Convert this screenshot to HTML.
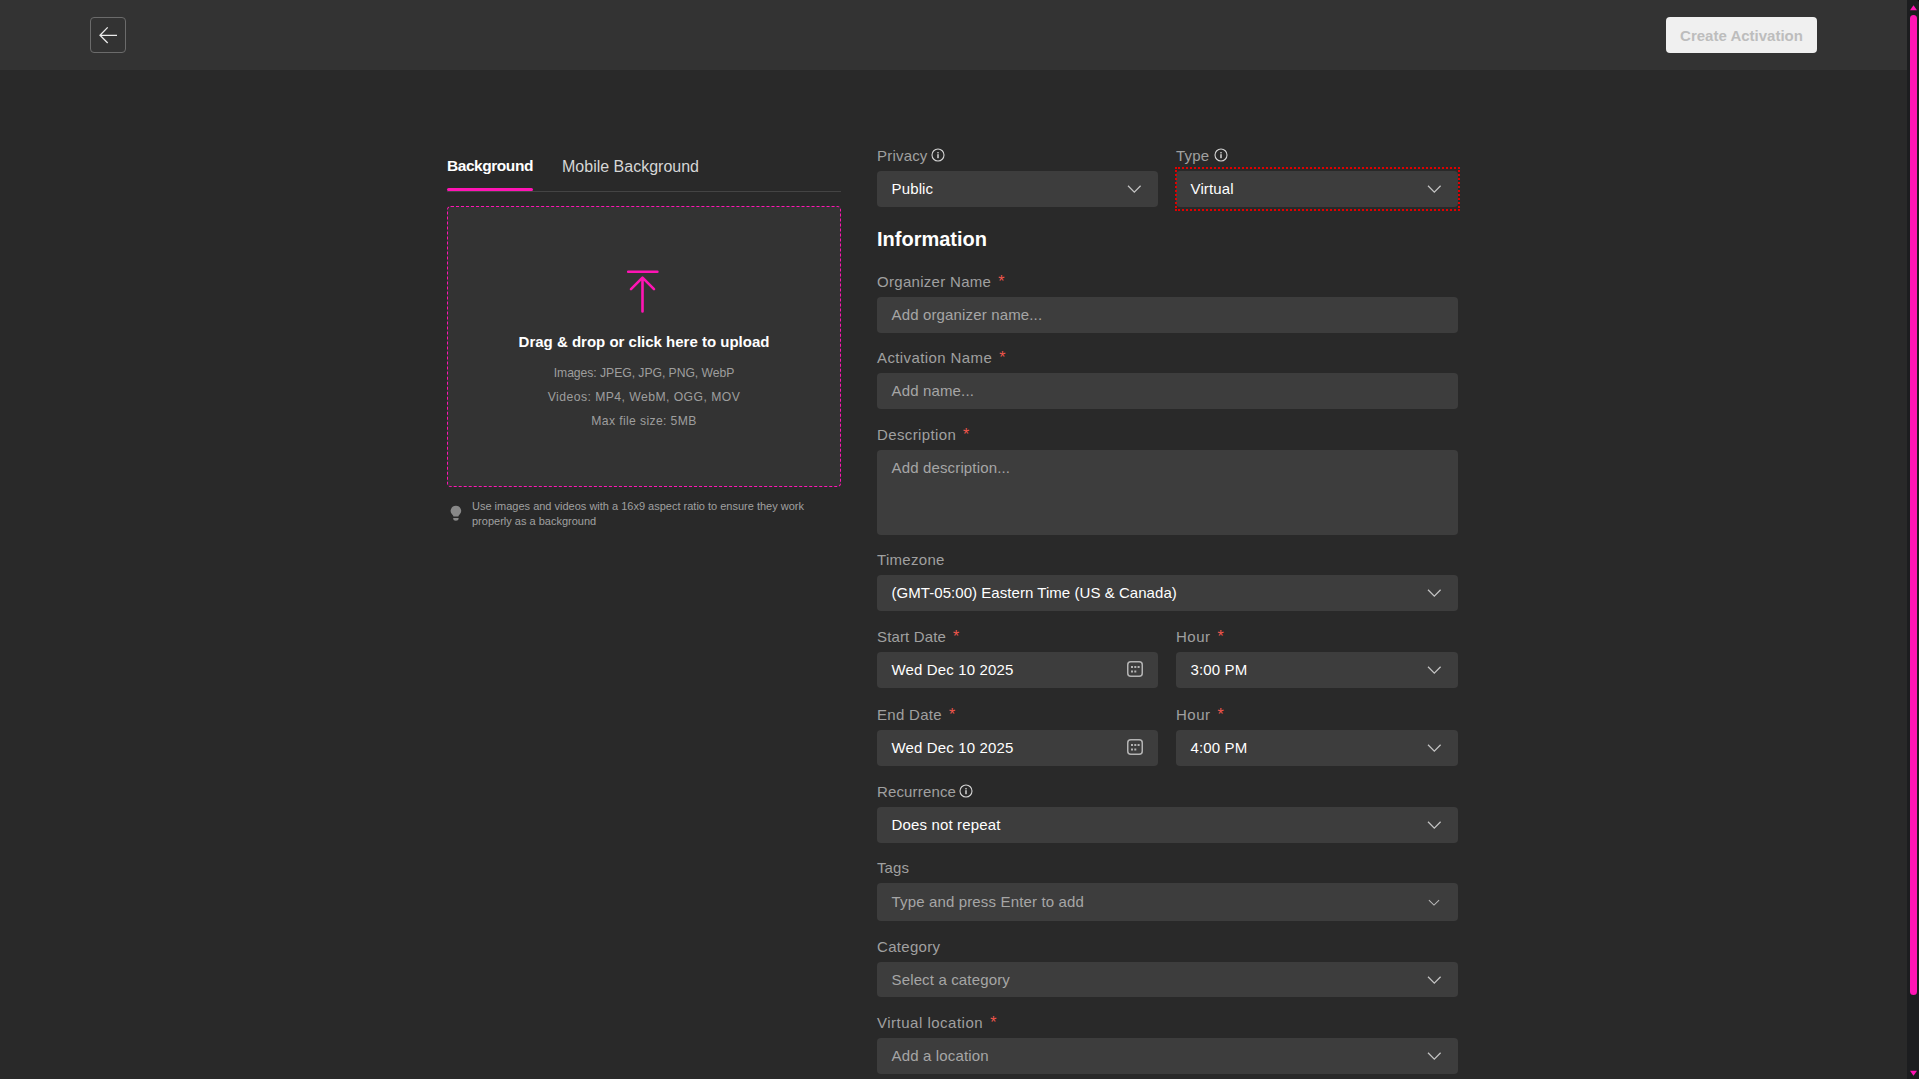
<!DOCTYPE html>
<html><head><meta charset="utf-8">
<style>
*{box-sizing:border-box;margin:0;padding:0}
html,body{width:1919px;height:1079px;overflow:hidden;background:#292929;font-family:"Liberation Sans",sans-serif;}
.a{position:absolute}
#hdr{left:0;top:0;width:1907px;height:70px;background:#333333}
#back{left:90px;top:17px;width:36px;height:36px;border:1px solid #6b6b6b;border-radius:4px}
#create{left:1666px;top:17px;width:151px;height:36px;background:#f0f0f0;border-radius:4px;color:#bdbdbd;font-size:15px;font-weight:bold;line-height:36px;padding-top:1px;text-align:center}
#sb{left:1907px;top:0;width:12px;height:1079px;background:#1c1d1f}
#thumb{left:1910px;top:15px;width:7px;height:980px;background:#ff14b4;border-radius:3.5px}
.tab{font-size:16px;line-height:20px;top:157px;white-space:nowrap}
.lbl{font-size:15px;color:#a0a0a0;white-space:nowrap;line-height:20px;margin-top:1px;letter-spacing:0.15px}
.req{color:#f0564c;margin-left:7px;font-size:16px;letter-spacing:0}
.fld{background:#3d3d3d;border-radius:4px;height:36px;font-size:15px;line-height:36px;padding-left:14.5px;color:#fff;white-space:nowrap;letter-spacing:0.15px}
.ph{color:#a6a6a6}
.chev{position:absolute;right:16px;top:12px;width:16px;height:12px}
</style></head><body>
<div id="hdr" class="a"></div>
<div id="back" class="a"><svg width="34" height="34" viewBox="0 0 34 34"><path d="M9 17.4H26M16.7 9.4L9 17.2L16.7 25" stroke="#ebebeb" stroke-width="1.3" fill="none"/></svg></div>
<div id="create" class="a">Create Activation</div>

<!-- Tabs -->
<div class="a tab" style="left:447px;color:#fff;font-weight:bold;font-size:15.5px;letter-spacing:-0.45px;top:156px">Background</div>
<div class="a tab" style="left:562px;color:#d6d6d6">Mobile Background</div>
<div class="a" style="left:447px;top:191px;width:394px;height:1px;background:#444"></div>
<div class="a" style="left:447px;top:188px;width:86px;height:3px;background:#ff14b4;border-radius:2px"></div>

<!-- Upload -->
<div class="a" style="left:447px;top:206px;width:394px;height:281px;background:#333;border:1px dashed #ff14b4;border-radius:4px"></div>
<svg class="a" style="left:620px;top:260px" width="46" height="60" viewBox="0 0 46 60"><path d="M8.2 11.7H37.4M22.5 18.5V51.5M11 29.2L22.5 17.7L34 29.2" stroke="#ff14b4" stroke-width="2.6" stroke-linecap="round" stroke-linejoin="round" fill="none"/></svg>
<div class="a" style="left:447px;top:332px;width:394px;text-align:center;color:#fff;font-weight:bold;font-size:15px;line-height:20px">Drag &amp; drop or click here to upload</div>
<div class="a" style="left:447px;top:361px;width:394px;text-align:center;color:#9e9e9e;font-size:12.2px;line-height:24px"><div style="letter-spacing:-0.05px">Images: JPEG, JPG, PNG, WebP</div><div style="letter-spacing:0.45px">Videos: MP4, WebM, OGG, MOV</div><div style="letter-spacing:0.36px">Max file size: 5MB</div></div>
<svg class="a" style="left:449px;top:505px" width="14" height="18" viewBox="0 0 14 18"><path d="M6.9 0.7A5.2 5.2 0 0 0 3.2 9.6C3.9 10.4 4.4 11 4.4 11.6H9.4C9.4 11 9.9 10.4 10.6 9.6A5.2 5.2 0 0 0 6.9 0.7ZM4.2 13H9.6V13.6C9.6 15 8.4 15.8 6.9 15.8S4.2 15 4.2 13.6Z" fill="#888"/></svg>
<div class="a" style="left:472px;top:499px;width:360px;color:#a0a0a0;font-size:11px;line-height:15px">Use images and videos with a 16x9 aspect ratio to ensure they work properly as a background</div>

<!-- Right form -->
<div class="a lbl" style="left:877px;top:145px;letter-spacing:0.2px">Privacy</div>
<div class="a lbl" style="left:1176px;top:145px;letter-spacing:0.2px">Type</div>
<div class="a fld" style="left:877px;top:171px;width:281px">Public</div>
<div class="a fld" style="left:1176px;top:171px;width:282px">Virtual</div>
<div class="a" style="left:1175px;top:167px;width:285px;height:44px;border:2px dotted #e00000"></div>
<div class="a" style="left:877px;top:227px;font-size:20px;font-weight:bold;color:#fff;line-height:24px">Information</div>

<div class="a lbl" style="left:877px;top:271px;letter-spacing:0.3px">Organizer Name<span class="req">*</span></div>
<div class="a fld ph" style="left:877px;top:297px;width:581px">Add organizer name...</div>
<div class="a lbl" style="left:877px;top:347px;letter-spacing:0.4px">Activation Name<span class="req">*</span></div>
<div class="a fld ph" style="left:877px;top:373px;width:581px">Add name...</div>
<div class="a lbl" style="left:877px;top:424px;letter-spacing:0.37px">Description<span class="req">*</span></div>
<div class="a fld ph" style="left:877px;top:450px;width:581px;height:85px;line-height:20px;padding-top:8px">Add description...</div>
<div class="a lbl" style="left:877px;top:549px;letter-spacing:0.3px">Timezone</div>
<div class="a fld" style="left:877px;top:575px;width:581px;letter-spacing:0.05px">(GMT-05:00) Eastern Time (US &amp; Canada)</div>
<div class="a lbl" style="left:877px;top:626px;letter-spacing:0.15px">Start Date<span class="req">*</span></div>
<div class="a lbl" style="left:1176px;top:626px;letter-spacing:0.5px">Hour<span class="req">*</span></div>
<div class="a fld" style="left:877px;top:652px;width:281px">Wed Dec 10 2025</div>
<div class="a fld" style="left:1176px;top:652px;width:282px">3:00 PM</div>
<div class="a lbl" style="left:877px;top:704px;letter-spacing:0.3px">End Date<span class="req">*</span></div>
<div class="a lbl" style="left:1176px;top:704px;letter-spacing:0.5px">Hour<span class="req">*</span></div>
<div class="a fld" style="left:877px;top:730px;width:281px">Wed Dec 10 2025</div>
<div class="a fld" style="left:1176px;top:730px;width:282px">4:00 PM</div>
<div class="a lbl" style="left:877px;top:781px;letter-spacing:0.15px">Recurrence</div>
<div class="a fld" style="left:877px;top:807px;width:581px">Does not repeat</div>
<div class="a lbl" style="left:877px;top:857px;letter-spacing:0.1px">Tags</div>
<div class="a fld ph" style="left:877px;top:883px;width:581px;height:38px;line-height:38px">Type and press Enter to add</div>
<div class="a lbl" style="left:877px;top:936px;letter-spacing:0.3px">Category</div>
<div class="a fld ph" style="left:877px;top:962px;width:581px;height:35px;line-height:35px">Select a category</div>
<div class="a lbl" style="left:877px;top:1012px;letter-spacing:0.5px">Virtual location<span class="req">*</span></div>
<div class="a fld ph" style="left:877px;top:1038px;width:581px">Add a location</div>

<svg class="a" style="left:1126px;top:184px" width="16" height="10" viewBox="0 0 16 10"><path d="M2 1.8L8.3 8.1L14.6 1.8" stroke="#c4c4c4" stroke-width="1.25" fill="none"/></svg>
<svg class="a" style="left:1426px;top:184px" width="16" height="10" viewBox="0 0 16 10"><path d="M2 1.8L8.3 8.1L14.6 1.8" stroke="#c4c4c4" stroke-width="1.25" fill="none"/></svg>
<svg class="a" style="left:1426px;top:588px" width="16" height="10" viewBox="0 0 16 10"><path d="M2 1.8L8.3 8.1L14.6 1.8" stroke="#c4c4c4" stroke-width="1.25" fill="none"/></svg>
<svg class="a" style="left:1426px;top:665px" width="16" height="10" viewBox="0 0 16 10"><path d="M2 1.8L8.3 8.1L14.6 1.8" stroke="#c4c4c4" stroke-width="1.25" fill="none"/></svg>
<svg class="a" style="left:1426px;top:743px" width="16" height="10" viewBox="0 0 16 10"><path d="M2 1.8L8.3 8.1L14.6 1.8" stroke="#c4c4c4" stroke-width="1.25" fill="none"/></svg>
<svg class="a" style="left:1426px;top:820px" width="16" height="10" viewBox="0 0 16 10"><path d="M2 1.8L8.3 8.1L14.6 1.8" stroke="#c4c4c4" stroke-width="1.25" fill="none"/></svg>
<svg class="a" style="left:1426px;top:975px" width="16" height="10" viewBox="0 0 16 10"><path d="M2 1.8L8.3 8.1L14.6 1.8" stroke="#c4c4c4" stroke-width="1.25" fill="none"/></svg>
<svg class="a" style="left:1426px;top:1051px" width="16" height="10" viewBox="0 0 16 10"><path d="M2 1.8L8.3 8.1L14.6 1.8" stroke="#c4c4c4" stroke-width="1.25" fill="none"/></svg>
<svg class="a" style="left:1427px;top:898px" width="14" height="9" viewBox="0 0 14 9"><path d="M1.9 2.2L7 7.1L12.1 2.2" stroke="#b8b8b8" stroke-width="1.05" fill="none"/></svg>
<svg class="a" style="left:1126px;top:660px" width="18" height="18" viewBox="0 0 18 18"><rect x="1.75" y="1.75" width="14.5" height="14.5" rx="3" stroke="#b4b4b4" stroke-width="1.5" fill="none"/><g fill="#b4b4b4"><rect x="5" y="6" width="2" height="2"/><rect x="8.3" y="6" width="2" height="2"/><rect x="11.6" y="6" width="2" height="2"/><rect x="5" y="10.5" width="2" height="2"/><rect x="8.3" y="10.5" width="2" height="2"/></g></svg>
<svg class="a" style="left:1126px;top:738px" width="18" height="18" viewBox="0 0 18 18"><rect x="1.75" y="1.75" width="14.5" height="14.5" rx="3" stroke="#b4b4b4" stroke-width="1.5" fill="none"/><g fill="#b4b4b4"><rect x="5" y="6" width="2" height="2"/><rect x="8.3" y="6" width="2" height="2"/><rect x="11.6" y="6" width="2" height="2"/><rect x="5" y="10.5" width="2" height="2"/><rect x="8.3" y="10.5" width="2" height="2"/></g></svg>
<svg class="a" style="left:930px;top:146.5px" width="16" height="16" viewBox="0 0 16 16"><circle cx="8" cy="8" r="6" stroke="#d4d4d4" stroke-width="1.1" fill="none"/><rect x="7.25" y="5.1" width="1.5" height="1.3" fill="#d4d4d4"/><rect x="7.25" y="7.2" width="1.5" height="4" fill="#d4d4d4"/></svg>
<svg class="a" style="left:1213px;top:146.5px" width="16" height="16" viewBox="0 0 16 16"><circle cx="8" cy="8" r="6" stroke="#d4d4d4" stroke-width="1.1" fill="none"/><rect x="7.25" y="5.1" width="1.5" height="1.3" fill="#d4d4d4"/><rect x="7.25" y="7.2" width="1.5" height="4" fill="#d4d4d4"/></svg>
<svg class="a" style="left:958px;top:782.5px" width="16" height="16" viewBox="0 0 16 16"><circle cx="8" cy="8" r="6" stroke="#d4d4d4" stroke-width="1.1" fill="none"/><rect x="7.25" y="5.1" width="1.5" height="1.3" fill="#d4d4d4"/><rect x="7.25" y="7.2" width="1.5" height="4" fill="#d4d4d4"/></svg>
<!-- scrollbar -->
<div id="sb" class="a"></div>
<div id="thumb" class="a"></div>
<svg class="a" style="left:1907px;top:0" width="12" height="14" viewBox="0 0 12 14"><path d="M3 10.3L6.5 5.3L10 10.3Z" fill="#ff14b4"/><path d="M10.5 0H12V2Z" fill="#000"/></svg>
<svg class="a" style="left:1907px;top:1066px" width="12" height="13" viewBox="0 0 12 13"><path d="M3 4.7L6.5 9.7L10 4.7Z" fill="#ff14b4"/></svg>
</body></html>
